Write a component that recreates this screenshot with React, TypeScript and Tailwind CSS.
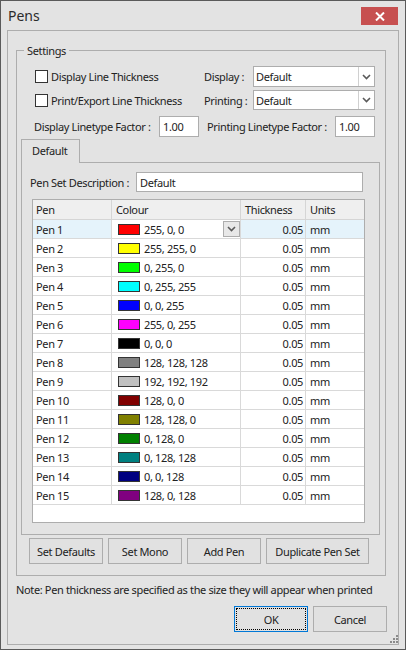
import React from "react";

const pens: [string, string, string][] = [
  ["Pen 1", "#ff0000", "255, 0, 0"],
  ["Pen 2", "#ffff00", "255, 255, 0"],
  ["Pen 3", "#00ff00", "0, 255, 0"],
  ["Pen 4", "#00ffff", "0, 255, 255"],
  ["Pen 5", "#0000ff", "0, 0, 255"],
  ["Pen 6", "#ff00ff", "255, 0, 255"],
  ["Pen 7", "#000000", "0, 0, 0"],
  ["Pen 8", "#808080", "128, 128, 128"],
  ["Pen 9", "#c0c0c0", "192, 192, 192"],
  ["Pen 10", "#800000", "128, 0, 0"],
  ["Pen 11", "#808000", "128, 128, 0"],
  ["Pen 12", "#008000", "0, 128, 0"],
  ["Pen 13", "#008080", "0, 128, 128"],
  ["Pen 14", "#000080", "0, 0, 128"],
  ["Pen 15", "#800080", "128, 0, 128"],
];

function Chevron() {
  return (
    <svg width="9" height="6" viewBox="0 0 9 6">
      <path d="M1 1 L4.5 4.5 L8 1" fill="none" stroke="#5a5a5a" strokeWidth="1.6" />
    </svg>
  );
}

function Select({ h }: { h: string }) {
  return (
    <div className={`w-[122px] ${h} bg-white border border-[#adadad] flex`}>
      <div className="flex-1 pl-[2px] flex items-center">Default</div>
      <div className="w-[16px] border-l border-[#d0d0d0] flex items-center justify-center">
        <Chevron />
      </div>
    </div>
  );
}

function Btn({ label, w }: { label: string; w: string }) {
  return (
    <div className={`${w} h-[26px] bg-[#e1e1e1] border border-[#adadad] flex items-center justify-center`}>
      {label}
    </div>
  );
}

export default function App() {
  return (
    <div className="w-[406px] h-[650px] bg-[#e3e3e3] border border-[#5a5a5a] flex flex-col text-[11px] tracking-[-0.36px] text-[#222222] font-['Noto_Sans',sans-serif] leading-[15px]">
      {/* title bar */}
      <div className="h-[29px] flex items-start justify-between">
        <div className="pl-[7px] pt-[5px] text-[14px] leading-[20px] tracking-normal text-[#2b2b2b]">Pens</div>
        <div className="mt-[6px] mr-[7px] w-[37px] h-[18px] bg-[#c75050] flex items-center justify-center">
          <svg width="10" height="9" viewBox="0 0 10 9">
            <path d="M1 0.5 L9 8.5 M9 0.5 L1 8.5" stroke="#ffffff" strokeWidth="2" />
          </svg>
        </div>
      </div>

      {/* outer frame */}
      <div className="ml-[6px] w-[392px] h-[615px] border border-[#adadad] relative flex flex-col">
        {/* Settings group */}
        <div className="mt-[19px] ml-[8px] w-[370px] h-[526px] border border-[#adadad] relative flex flex-col">
          <div className="absolute left-[7px] -top-[8px] px-[3px] bg-[#e3e3e3] leading-[15px]">Settings</div>

          {/* row 1 */}
          <div className="mt-[15px] h-[21px] pl-[18px] flex items-center">
            <div className="w-[169px] flex items-center gap-[3px]">
              <div className="w-[13px] h-[13px] border border-[#333] bg-white" />
              <span>Display Line Thickness</span>
            </div>
            <div className="w-[49px]">Display :</div>
            <Select h="h-[21px]" />
          </div>
          {/* row 2 */}
          <div className="mt-[3px] h-[20px] pl-[18px] flex items-center">
            <div className="w-[169px] flex items-center gap-[3px]">
              <div className="w-[13px] h-[13px] border border-[#333] bg-white" />
              <span>Print/Export Line Thickness</span>
            </div>
            <div className="w-[49px]">Printing :</div>
            <Select h="h-[20px]" />
          </div>
          {/* row 3 */}
          <div className="mt-[6px] h-[21px] pl-[17px] flex items-center">
            <div className="w-[125px]">Display Linetype Factor :</div>
            <div className="w-[40px] h-[21px] bg-white border border-[#adadad] pl-[3px] flex items-center">1.00</div>
            <div className="ml-[8px] w-[128px]">Printing Linetype Factor :</div>
            <div className="w-[40px] h-[21px] bg-white border border-[#adadad] pl-[3px] flex items-center">1.00</div>
          </div>

          {/* tab */}
          <div className="mt-[2px] ml-[4px] flex flex-col">
            <div className="w-[59px] h-[24px] border-l border-t border-r border-[#adadad] bg-[#e3e3e3] -mb-[1px] relative z-10 pl-[10px] pt-[3px]">
              Default
            </div>
            <div className="w-[359px] h-[373px] border border-[#adadad] flex flex-col">
              <div className="mt-[9px] h-[20px] flex items-center">
                <div className="w-[114px] pl-[8px]">Pen Set Description :</div>
                <div className="w-[227px] h-[20px] bg-white border border-[#adadad] pl-[3px] flex items-center">Default</div>
              </div>

              {/* table */}
              <div className="mt-[7px] ml-[10px] w-[333px] h-[324px] border border-[#adadad] bg-white flex flex-col">
                <div className="grid grid-cols-[79px_129px_65px_58px] h-[20px] bg-[#efefef] border-b border-[#d5d5d5]">
                  <div className="border-r border-[#d5d5d5] pl-[3px] flex items-center">Pen</div>
                  <div className="border-r border-[#d5d5d5] pl-[4px] flex items-center">Colour</div>
                  <div className="border-r border-[#d5d5d5] pl-[4px] flex items-center">Thickness</div>
                  <div className="pl-[4px] flex items-center">Units</div>
                </div>
                {pens.map(([name, color, rgb], i) => {
                  const sel = i === 0;
                  return (
                    <div
                      key={name}
                      className={`grid grid-cols-[79px_129px_65px_58px] h-[19px] border-b border-[#d9d9d9] ${sel ? "bg-[#e5f3fb]" : "bg-white"}`}
                    >
                      <div className="border-r border-[#d9d9d9] pl-[3px] flex items-center">{name}</div>
                      <div className="border-r border-[#d9d9d9] pl-[6px] flex items-center bg-white relative">
                        <div className="w-[22px] h-[11px] border border-[#333]" style={{ backgroundColor: color }} />
                        <span className="ml-[4px]">{rgb}</span>
                        {sel && (
                          <div className="absolute right-[0px] top-[1px] w-[17px] h-[16px] border border-[#adadad] bg-[#e8e8e8] flex items-center justify-center">
                            <Chevron />
                          </div>
                        )}
                      </div>
                      <div className="border-r border-[#d9d9d9] pr-[2px] flex items-center justify-end">0.05</div>
                      <div className="pl-[4px] flex items-center">mm</div>
                    </div>
                  );
                })}
              </div>
            </div>
          </div>

          {/* buttons */}
          <div className="mt-[3px] ml-[12px] flex gap-[5px]">
            <Btn label="Set Defaults" w="w-[74px]" />
            <Btn label="Set Mono" w="w-[74px]" />
            <Btn label="Add Pen" w="w-[74px]" />
            <Btn label="Duplicate Pen Set" w="w-[103px]" />
          </div>
        </div>

        {/* note */}
        <div className="mt-[6px] pl-[8px]">Note: Pen thickness are specified as the size they will appear when printed</div>

        {/* OK / Cancel */}
        <div className="mt-[9px] mr-[11px] flex justify-end gap-[5px]">
          <div className="w-[74px] h-[26px] bg-[#e1e1e1] border border-[#0078d7] relative flex items-center justify-center">
            <div className="absolute inset-[1px] border border-dotted border-[#000]" />
            OK
          </div>
          <Btn label="Cancel" w="w-[74px]" />
        </div>

        {/* grip */}
        <svg className="absolute right-[0px] bottom-[1px]" width="9" height="9" viewBox="0 0 9 9">
          <rect x="7" y="1" width="2" height="2" fill="#8a8a8a" />
          <rect x="4" y="4" width="2" height="2" fill="#8a8a8a" />
          <rect x="7" y="4" width="2" height="2" fill="#8a8a8a" />
          <rect x="1" y="7" width="2" height="2" fill="#8a8a8a" />
          <rect x="4" y="7" width="2" height="2" fill="#8a8a8a" />
          <rect x="7" y="7" width="2" height="2" fill="#8a8a8a" />
        </svg>
      </div>
    </div>
  );
}
